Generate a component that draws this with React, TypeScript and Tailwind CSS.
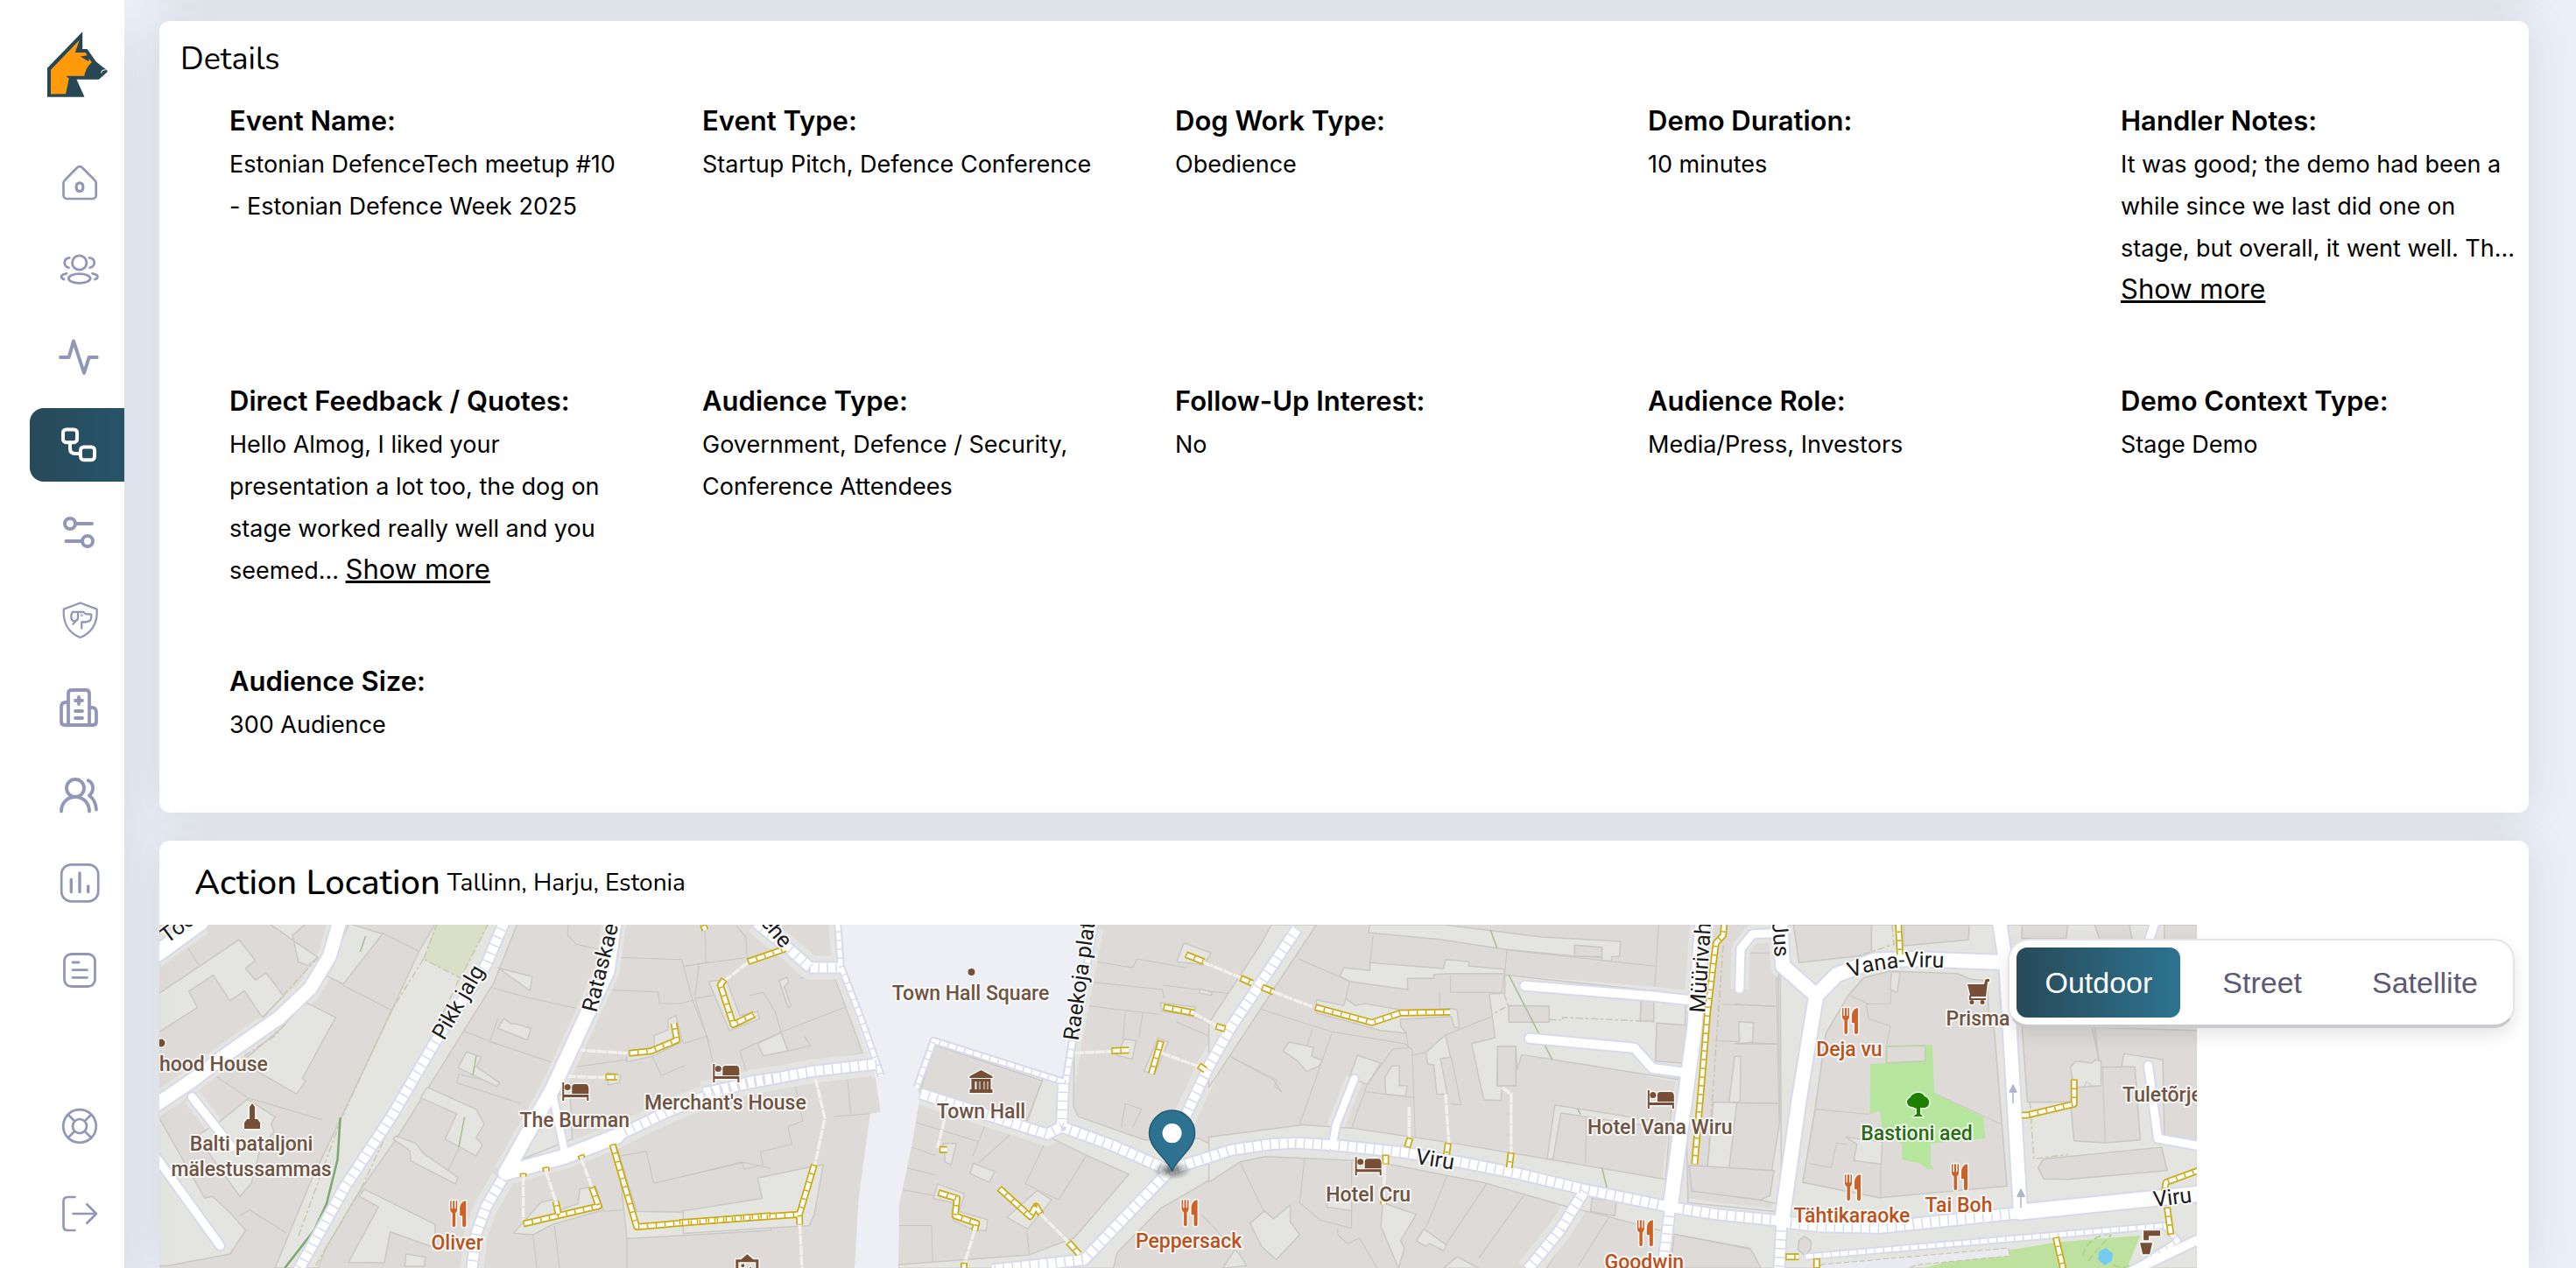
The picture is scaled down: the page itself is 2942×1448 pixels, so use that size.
import React, { useState } from 'react';

// ---------- Sidebar icons (48px grid) ----------

const HomeIcon = () => (
  <>
    <path strokeWidth="2.7" d="M6.5 25.5c0-1.8.7-3 2-4.2L22 7.5c1.8-1.8 4.2-1.8 6 0l13.7 13.8c1.3 1.2 2 2.4 2 4.2V39a4 4 0 0 1-4 4H10.5a4 4 0 0 1-4-4z" />
    <rect strokeWidth="3.2" x="21.2" y="24.8" width="7.6" height="9.6" rx="3.6" />
  </>
);

const TeamIcon = () => (
  <g strokeWidth="2.8">
    <circle cx="24.7" cy="16" r="8.2" />
    <ellipse cx="24.7" cy="34" rx="12.4" ry="5.4" />
    <path d="M13.3 10.3C6 11 6 20.5 12.5 21.7M36 10.3c7.5.7 7.5 10.2.7 11.4M10 28.3c-7 1.2-7.5 4.7-3 6.7M39.5 28.3c7 1.2 7.5 4.7 3 6.7" />
  </g>
);

const ActivityIcon = () => <path strokeWidth="4" d="M3 24h9.7L18 5.5 30 42l5.7-18h9" />;

const FlowIcon = () => (
  <g strokeWidth="4">
    <rect x="6" y="6.4" width="16" height="14.8" rx="3.6" />
    <rect x="26" y="26.4" width="16" height="14.8" rx="3.6" />
    <path d="M14 21.5v6.5c0 4 2 6 6 6h6" />
  </g>
);

const SlidersIcon = () => (
  <g strokeWidth="4">
    <circle cx="14" cy="14" r="6" />
    <path d="M20 14h19M9.5 34H28" />
    <circle cx="34" cy="34" r="6" />
  </g>
);

const ShieldDogIcon = () => (
  <g strokeWidth="2.3">
    <path d="M25.7 4.5 44.6 11.6C46 28 38 39 25.7 44 13.2 39 5.5 28 6.8 11.6z" />
    <path d="M17.5 14.8h11.8l2.4 2.2 6.6.7v2.4c0 2.6-1.2 4.8-3.4 5.6-2.2.8-4.8.8-7.6.8v7.2" />
    <path d="M17.5 14.8c-1.9 1.200-2.500 4-2 7.200.3 2.600 1.700 3.300 4 3 2.700-.3 3.500-1.200 3.500-3.500V15M20.500 25.500l-3.200 3.200" />
    <circle cx="27.3" cy="18.5" r=".4" />
  </g>
);

const HospitalIcon = () => (
  <g strokeWidth="3.8">
    <path d="M12 44V8c0-2.5 1.5-4 4-4h16c2.5 0 4 1.5 4 4v36" />
    <path d="M12 18H9.5C6 18 4 20 4 23v17c0 2.5 1.5 4 4 4h32c2.5 0 4-1.5 4-4V29c0-3-2-5-5-5h-3" />
    <path d="M24 12v8M20 16h8M20 28h8M20 36h8" />
  </g>
);

const PeopleIcon = () => (
  <g strokeWidth="3.8">
    <circle cx="20" cy="16" r="10" />
    <path d="M4 42.5C4 33 11 26 20 26s16 7 16 16.5M34.7 7.3c6.5 3 7.3 11.7 1.3 17.2 5 3.5 7.5 9 8 16" />
  </g>
);

const ChartIcon = () => (
  <>
    <rect strokeWidth="2.7" x="4.2" y="3.3" width="42" height="42" rx="11" />
    <path strokeWidth="3.4" d="M15.3 20.5v14M25 13v21.5M34.7 28v6.5" />
  </>
);

const DocIcon = () => (
  <g strokeWidth="2.8">
    <rect x="7.5" y="5.5" width="35" height="37" rx="8" />
    <path d="M17 15h7M17 23.7h16.5M17 32.3h16.5" />
  </g>
);

const HelpIcon = () => (
  <g strokeWidth="2.7">
    <circle cx="25" cy="24" r="18.8" />
    <circle cx="25" cy="24" r="8" />
    <path d="m11.7 10.7 7.6 7.6M38.3 10.7l-7.6 7.6M11.7 37.3l7.6-7.6M38.3 37.3l-7.6-7.6" />
  </g>
);

const LogoutIcon = () => (
  <path strokeWidth="2.7" d="M19.5 5h-8c-3.5 0-5 1.5-5 5v28c0 3.5 1.500 5 5 5h8M17.500 24H44M33.300 13.200 44 24 33.300 34.800" />
);

const mainNav = [
  { label: 'Home', icon: HomeIcon },
  { label: 'Teams', icon: TeamIcon },
  { label: 'Activity', icon: ActivityIcon },
  { label: 'Actions', icon: FlowIcon, active: true },
  { label: 'Settings', icon: SlidersIcon },
  { label: 'Dogs', icon: ShieldDogIcon },
  { label: 'Medical', icon: HospitalIcon },
  { label: 'Handlers', icon: PeopleIcon },
  { label: 'Reports', icon: ChartIcon },
  { label: 'Documents', icon: DocIcon },
];

const footerNav = [
  { label: 'Help', icon: HelpIcon },
  { label: 'Log out', icon: LogoutIcon },
];

type NavEntry = { label: string; icon: React.FC; active?: boolean };

const NavItem: React.FC<{ item: NavEntry }> = ({ item }) => {
  const Glyph = item.icon;
  return (
    <a
      href="#"
      aria-label={item.label}
      className={`flex h-[84px] items-center rounded-l-2xl pl-8 ${item.active ? 'bg-linear-to-r from-[#274a59] to-[#275469] text-white' : 'text-[#9297b7]'}`}
    >
      <svg viewBox="0 0 48 48" className="h-12 w-12" fill="none" stroke="currentColor" strokeLinecap="round" strokeLinejoin="round">
        <Glyph />
      </svg>
    </a>
  );
};

const Logo = () => (
  <svg viewBox="102 48 206 223" className="ml-5 h-[75px] w-[69px]">
    <path fill="#274754" d="M222 48v59h16l30 43 25 20c6 4 13 9 15 14l-30 27h-76l27 60H102v-99z" />
    <path fill="#ff9a0a" d="m114 178 98-102-15 43h36l5 10-23 4 28 17 1-10 10 12c-13 13-21 24-26 47h-62l10 8-11 53-51 1z" />
    <path fill="none" stroke="#fff" strokeWidth="3" d="M287 190c-2-7 2-12 14-12" />
  </svg>
);

const Sidebar = () => (
  <aside className="relative z-10 flex w-[142px] shrink-0 flex-col bg-white pt-9 pb-5 pl-[34px] shadow-[0_40px_60px_rgba(20,24,50,0.1)]">
    <Logo />
    <nav className="mt-[55px] flex flex-col gap-4">
      {mainNav.map((item) => <NavItem key={item.label} item={item} />)}
    </nav>
    <nav className="mt-auto flex flex-col gap-4">
      {footerNav.map((item) => <NavItem key={item.label} item={item} />)}
    </nav>
  </aside>
);

// ---------- Details ----------

const details = [
  { label: 'Event Name:', value: 'Estonian DefenceTech meetup #10 - Estonian Defence Week 2025' },
  { label: 'Event Type:', value: 'Startup Pitch, Defence Conference' },
  { label: 'Dog Work Type:', value: 'Obedience' },
  { label: 'Demo Duration:', value: '10 minutes' },
  { label: 'Handler Notes:', value: 'It was good; the demo had been a while since we last did one on stage, but overall, it went well. Th...', more: true },
  { label: 'Direct Feedback / Quotes:', value: 'Hello Almog, I liked your presentation a lot too, the dog on stage worked really well and you seemed...', more: true },
  { label: 'Audience Type:', value: 'Government, Defence / Security, Conference Attendees' },
  { label: 'Follow-Up Interest:', value: 'No' },
  { label: 'Audience Role:', value: 'Media/Press, Investors' },
  { label: 'Demo Context Type:', value: 'Stage Demo' },
  { label: 'Audience Size:', value: '300 Audience' },
];

const DetailsCard = () => (
  <section className="rounded-xl bg-white pt-[18px] pb-[76px] shadow-[0_0_50px_rgba(70,60,35,0.12)]">
    <h2 className="ml-6 font-['Nunito','Noto_Sans',sans-serif] text-[36px] leading-[52px]">Details</h2>
    <dl className="mt-[18px] -mr-[34px] ml-10 grid grid-cols-5 gap-y-[76px]">
      {details.map((item) => (
        <div key={item.label} className="px-10">
          <dt className="text-[31px] leading-[52px] font-semibold">{item.label}</dt>
          <dd className="text-[27px] leading-[48px]">
            {item.value}{' '}
            {item.more && <button className="text-[31px] leading-8 underline">Show more</button>}
          </dd>
        </div>
      ))}
    </dl>
  </section>
);

// ---------- Map ----------

// Geometry is stored per tile; each tile has its own origin and scale.
type Tile = { x: number; y: number; sx: number; sy: number };
const W: Tile = { x: 180, y: 920, sx: 2.24, sy: 2.97 };
const C: Tile = { x: 780, y: 1040, sx: 2.24, sy: 3 };
const E: Tile = { x: 1380, y: 1040, sx: 2.24, sy: 3 };
const F: Tile = { x: 1980, y: 1040, sx: 1.63, sy: 3 };

const project = (t: Tile, points: string) =>
  points
    .split(' ')
    .map((p) => {
      const [x, y] = p.split(',').map(Number);
      return `${(t.x + x / t.sx).toFixed(1)},${(t.y + y / t.sy).toFixed(1)}`;
    })
    .join(' ');

type Shape = [Tile, string];
type Line = [Tile, string, number];

const open: Shape[] = [
  [W, '710,400 920,400 860,600 610,1130 510,1320 430,1500 410,1568 300,1568 390,1280 600,690 670,490'],
  [W, '0,640 208,455 250,525 225,552 250,592 278,568 322,645 268,718 222,628 185,662 142,575 80,630 102,685 0,770'],
  [W, '375,665 455,718 370,925 378,935 355,978 215,870 320,750'],
  [W, '285,400 410,515 385,542 360,530 345,440 380,400'],
  [W, '490,400 575,435 475,605 428,575'],
  [W, '160,1070 230,995 300,1055 290,1080 298,1105 262,1165 240,1280 210,1325 100,1120'],
  [W, '0,1050 120,1330 140,1325 185,1380 225,1440 185,1520 25,1560 0,1560'],
  [W, '870,550 958,580 952,628'],
  [W, '885,722 905,740 918,740 955,755 945,795 870,755'],
  [W, '790,835 828,852 815,885 875,940 868,952 768,888'],
  [W, '690,955 815,1030 835,1080 815,1125 830,1150 815,1188 735,1130 765,1045 672,990'],
  [W, '610,1120 660,1145 680,1180 768,1260 762,1283 648,1205 645,1170 602,1130'],
  [W, '528,1300 710,1420 710,1500 595,1445 580,1550 488,1548 565,1360 515,1325'],
  [W, '635,1520 685,1530 682,1562 632,1562'],
  [W, '1010,980 1055,980 1060,1130 930,1200'],
  [W, '1175,1160 1225,1375 1335,1378 1568,1335 1568,1440 1200,1468'],
  [W, '980,1345 1010,1335 1030,1370 1075,1350 1080,1300 1120,1290 1140,1370 1010,1420 960,1455 910,1450'],
  [W, '1200,845 1270,820 1270,780 1305,760 1305,725 1325,712 1342,800 1265,850 1200,868'],
  [W, '1150,905 1185,915 1180,940 1152,948'],
  [C, '190,915 345,872 358,870 335,1040 322,1078 0,1105 0,1028 202,985'],
  [C, '65,243 110,235 145,360 190,345 195,370 118,410'],
  [C, '245,240 265,228 270,245 258,260 275,325 268,330'],
  [C, '190,455 250,418 268,480 205,497'],
  [C, '650,935 720,970 705,1030 778,1058 775,1095 745,1095 690,1060 690,1000 640,985'],
  [C, '905,958 942,990 880,1090 828,1050 870,1000'],
  [C, '742,865 797,893 782,930 733,900'],
  [C, '665,797 698,797 685,870 670,860'],
  [C, '1280,110 1350,145 1330,185 1262,175'],
  [C, '1220,315 1310,330 1305,360 1225,345'],
  [C, '1215,435 1240,450 1205,560 1178,550'],
  [C, '1128,440 1158,445 1148,508 1108,495'],
  [C, '1322,268 1352,280 1350,290 1320,282'],
  [C, '918,580 1000,460 998,670 1010,705 1180,785 1320,780 1422,860 1310,950 1220,1020 1110,1170 1100,1224 550,1224 550,1212 885,1178 1000,1120 1140,902 1035,840 860,725 880,720'],
  [C, '1410,1160 1422,1175 1440,1215 1380,1224'],
  [E, '160,48 275,48 165,270 0,605 0,385 135,110'],
  [E, '335,225 345,195 412,205 412,178 600,198 605,167 665,175 665,190 755,200 755,215 620,215 575,218 575,232 508,232 508,270 360,242'],
  [E, '412,48 600,48 850,90 1053,105 1050,155 1030,158 1030,172 1005,170 1005,160 935,155 760,133 590,98 408,75'],
  [E, '275,305 345,325 350,302 375,325 400,318 500,342 620,335 635,340 640,400 628,400 620,362 490,372 490,395 505,420 440,410 275,350'],
  [E, '717,285 757,283 757,220 1140,275 1220,290 1215,520 1200,578 800,493 788,545 785,465 740,465 736,600 750,600 747,650 703,648 672,455 732,435'],
  [E, '555,485 605,425 618,502 592,507 610,628 583,628 575,528 560,525'],
  [E, '380,495 440,522 405,595 360,570'],
  [E, '450,570 468,532 487,530 487,598 507,600 503,635 452,628'],
  [E, '190,480 205,450 268,468 262,497 290,512 282,532 250,550 225,512'],
  [E, '885,665 1165,725 1165,745 900,693 880,850 865,850'],
  [E, '0,775 240,733 370,745 620,795 865,850 1168,920 1185,640 1220,640 1225,1000 1450,1030 1568,1030 1568,1100 1480,1224 1400,1224 1380,1155 1190,1108 1000,1040 920,1015 700,930 450,865 370,855 145,842 80,860 0,930'],
  [E, '105,1070 142,1028 165,1055 208,1008 208,1065 232,1110 172,1195 135,1150'],
  [E, '445,1000 530,1040 490,1130 500,1155 485,1224 440,1080'],
  [E, '305,980 365,990 365,1028 302,1015'],
  [E, '530,1130 550,1090 608,1145 600,1165 565,1140 555,1150'],
  [E, '635,1185 690,1224 600,1224'],
  [E, '1355,380 1393,383 1390,450 1357,455'],
  [E, '1345,498 1360,500 1358,655 1330,655'],
  [E, '1290,655 1350,657 1330,885 1275,880'],
  [E, '1455,60 1500,60 1500,175 1568,170 1568,1040 1410,990 1430,970 1460,720'],
  [F, '85,48 861,48 861,1224 88,1224'],
];

const blocks: Shape[] = [
  [E, '767,325 870,327 870,382 767,382'],
  [E, '935,118 1005,125 1005,158 935,155'],
  [E, '738,465 785,465 785,600 738,600'],
  [E, '980,985 1042,995 1038,1045 976,1030'],
  [E, '1105,308 1138,312 1138,378 1103,378'],
  [E, '1145,385 1222,392 1212,522 1142,515'],
  [E, '1228,872 1445,890 1435,975 1410,990 1235,960'],
  [E, '1190,1108 1385,1158 1412,1224 1180,1224'],
  [C, '640,458 918,582 878,722 608,612'],
  [F, '110,48 255,48 255,150 120,178'],
  [F, '315,48 437,48 435,100 315,120'],
  [F, '170,420 212,290 240,230 290,207 415,215 440,235 470,240 475,400 483,400 507,943 270,983 127,930 150,680'],
  [F, '535,395 665,395 680,530 745,535 755,785 690,795 632,788 625,655 545,655'],
  [F, '575,850 795,810 805,890 620,920 575,918 565,880'],
  [F, '670,400 861,410 861,795 800,775 797,510 725,490 720,535 680,535'],
  [F, '535,48 620,48 617,95 535,95'],
  [F, '670,48 735,48 740,100 680,100'],
  [F, '800,48 861,48 861,100 800,100'],
  [F, '120,1130 130,1115 142,1130 142,1160 130,1180 118,1160'],
];

const yards: Shape[] = [
  [F, '625,535 635,515 665,522 672,510 682,515 682,600 632,605'],
  [F, '207,775 275,792 273,868 222,855 228,800'],
  [F, '292,210 308,210 303,280 290,270'],
];

const borders: Shape[] = [
  [W, '65,455 105,540'], [W, '575,432 670,495'], [W, '475,610 600,695'], [W, '210,1390 235,1370 330,1450'],
  [W, '45,1420 75,1505 25,1530 5,1430 45,1420'], [W, '135,905 230,990 420,1065'], [W, '850,615 945,650 1080,690'],
  [W, '870,720 850,800 1040,885'], [W, '785,765 870,810'], [W, '1050,400 1048,440 1070,470 1130,488'],
  [W, '1180,515 1340,522 1368,660 1410,800'], [W, '1150,625 1280,632 1283,670 1335,672 1368,660'], [W, '1350,545 1410,530'],
  [W, '850,935 770,910 765,940 930,1010'], [W, '740,1245 770,1160'], [W, '560,1460 580,1470 578,1520 560,1518'],
  [W, '1265,850 1288,915 1350,880'], [W, '1075,885 1260,850'], [W, '1268,1280 1500,1210 1568,1230'], [W, '1175,1190 1250,1172 1268,1280'],
  [W, '960,1455 970,1568'], [W, '1015,1425 1028,1568'], [W, '1140,1375 1200,1370'], [W, '1200,1468 1200,1568'],
  [C, '135,50 160,90 165,180'], [C, '55,55 58,175'], [C, '0,190 165,160'], [C, '40,185 30,300 75,290'], [C, '30,300 60,430 80,540'],
  [C, '0,455 60,430'], [C, '145,480 250,415 415,330'], [C, '245,415 270,480 325,462 310,430'], [C, '170,290 205,280 235,345 250,415'],
  [C, '145,480 165,570'], [C, '300,230 385,220 458,487 165,570'], [C, '285,590 305,720 268,740 278,800 198,825 203,870 155,885'],
  [C, '362,575 490,562'], [C, '420,575 428,695'], [C, '385,705 480,695'], [C, '155,885 150,860 0,910'],
  [C, '595,725 755,790 740,840'], [C, '585,810 645,838'], [C, '570,880 645,905'], [C, '560,955 640,975'], [C, '550,1078 635,1078 638,1205'],
  [C, '755,865 845,755'], [C, '925,795 875,935 960,990 1030,840'], [C, '878,1095 885,1178'], [C, '775,725 755,790'],
  [C, '1055,175 1150,195 1160,165 1285,195'], [C, '1050,245 1225,270 1230,300'], [C, '1030,325 1215,355'], [C, '1130,345 1125,440'],
  [C, '1175,352 1165,435'], [C, '1228,255 1400,285'], [C, '1270,350 1385,400'], [C, '1260,380 1345,430'], [C, '1130,660 1172,680 1150,740'],
  [C, '1130,660 1120,740'], [C, '1425,865 1485,1030'], [C, '1325,1040 1410,1160'], [C, '1400,500 1510,580 1530,620'],
  [E, '230,165 360,242 350,300'], [E, '135,338 315,415 500,455 520,475'], [E, '55,500 175,580 168,600 187,622'], [E, '315,418 230,740'],
  [E, '520,475 528,790'], [E, '520,495 555,485 605,425 725,362'], [E, '505,420 510,470 470,475 405,595 365,745'], [E, '620,500 645,665 620,662'],
  [E, '420,85 412,178'], [E, '360,242 510,270'], [E, '618,220 618,280 750,280 755,215'], [E, '762,135 757,215'], [E, '765,135 1140,190'],
  [E, '1150,48 1140,275'], [E, '590,280 590,335'], [E, '1310,320 1450,328'], [E, '1300,445 1455,457'], [E, '1285,655 1455,660'],
  [E, '1380,145 1450,145 1458,720'], [E, '965,705 963,865'], [E, '245,845 232,1000 285,1060 365,1087'], [E, '365,860 365,1087'],
  [E, '610,905 555,1085'], [E, '710,935 600,1155'], [E, '808,970 690,1190'], [E, '955,1020 865,1224'], [E, '1025,1045 945,1215'],
  [E, '385,1120 430,1224'], [E, '330,1085 330,1110 355,1140 385,1120'], [E, '400,620 525,640'], [E, '265,405 250,465'],
  [F, '152,680 250,697'], [F, '245,320 250,370 290,395 283,460'], [F, '245,320 290,318 292,275'], [F, '215,290 250,320'],
  [F, '372,625 495,730'], [F, '140,865 180,880 190,795 210,800'], [F, '272,865 272,980'], [F, '685,535 690,795'], [F, '632,605 650,605 655,585 665,600 682,600'],
  [F, '0,320 75,328'], [F, '0,455 80,457'], [F, '0,658 80,660'],
];

const paths: Shape[] = [
  [W, '680,520 600,690 470,1060 360,1460'], [W, '715,400 680,520 775,585 845,400'], [W, '770,590 520,1300 400,1568'],
  [W, '410,515 270,718'], [W, '375,665 300,780 215,855'],
  [E, '870,373 905,375 905,365 1140,380'], [E, '755,285 765,325 725,355'], [E, '1315,120 1275,880'],
  [F, '550,655 557,850 620,835'], [F, '293,48 297,115 230,155'],
];

const fences: Shape[] = [
  [W, '532,442 518,495'], [W, '815,848 806,915'], [W, '785,1055 770,1158'],
  [E, '720,65 737,128'], [E, '767,220 878,510'], [E, '1005,880 1018,950'], [E, '943,678 950,697'],
];

const streets: Line[] = [
  [W, '466,390 440,510 390,620 310,720 180,840 90,930 -10,1020', 15],
  [W, '-10,510 110,395', 18],
  [W, '88,988 190,1158', 9],
  [W, '-10,1180 160,1492', 9],
  [W, '1168,390 1150,560 1080,760 1010,960 890,1245', 16],
  [W, '1012,990 1040,1170', 8],
  [W, '890,1245 1040,1190 1175,1120', 16],
  [E, '1262,40 1242,400 1180,1015', 16],
  [E, '808,257 1140,293 1240,308', 10],
  [E, '820,437 1088,470 1135,540 1220,555', 10],
  [E, '372,575 325,735 316,805', 8],
  [E, '1357,268 1360,130 1390,80 1470,75', 9],
  [F, '85,40 90,190 152,290 120,650 88,1065', 16],
  [F, '152,290 190,220 260,170 330,165 540,180', 16],
  [F, '493,40 505,180 532,1030', 15],
  [F, '532,1032 870,968', 17],
  [F, '770,530 788,780 870,807', 9],
  [F, '782,40 770,110', 9],
  [F, '870,1120 740,1234', 10],
];

const walks: Line[] = [
  [W, '888,390 840,540 710,800 600,1050 480,1290 360,1575', 11],
  [W, '882,1265 840,1360 815,1450 803,1575', 11],
  [W, '1175,1120 1300,1040 1430,970 1520,935 1575,924', 11],
  [C, '50,625 170,590 330,550 495,525', 11],
  [C, '185,40 270,130 325,195 402,195', 11],
  [C, '395,40 403,190 455,370 506,565', 5],
  [C, '1050,60 995,450 978,590', 6],
  [C, '978,588 640,445 597,605', 5],
  [C, '605,625 930,765 968,740 972,590', 11],
  [C, '968,740 1100,805 1240,888', 11],
  [C, '1240,888 1330,850 1400,820 1500,800 1568,795', 11],
  [C, '1240,895 1025,1195 790,1230', 11],
  [C, '1570,60 1500,200 1400,400 1345,530 1250,800', 11],
  [E, '220,795 340,805 500,828 640,860 790,900 960,955 1180,1015 1300,1040 1450,1060', 11],
  [E, '960,960 900,1090 815,1230', 11],
  [E, '1180,1015 1160,1230', 11],
  [F, '88,1065 160,1080 270,1085 400,1060 530,1035', 12],
  [F, '88,1065 83,1230', 11],
  [F, '130,1185 800,1078 825,1130 740,1230', 5],
];

const arcades: Shape[] = [
  [W, '1205,840 1262,832 1328,795 1320,738'], [W, '1145,920 1175,920'], [W, '935,1418 1128,1358 1110,1292'], [W, '1025,1388 1018,1342'],
  [W, '1163,1148 1225,1428 1568,1390'], [W, '1395,404 1400,422'], [W, '935,1246 935,1258'], [W, '992,1225 994,1240'], [W, '1082,1184 1085,1196'],
  [C, '165,175 262,130'], [C, '105,235 95,255 128,390 182,355'], [C, '335,870 297,1040 298,1075'], [C, '-10,1068 297,1040'],
  [C, '652,965 700,985 695,1045 750,1070 745,1095'], [C, '808,950 887,1047 902,1012 915,1040'], [C, '985,1135 1012,1175'],
  [C, '718,1205 718,1230'], [C, '655,818 675,818'], [C, '1285,150 1332,175'], [C, '1228,330 1306,350'], [C, '1095,480 1140,478'],
  [C, '1222,445 1197,558'], [C, '1425,230 1455,248'], [C, '1480,262 1510,278'], [C, '1362,395 1386,405'], [C, '1318,530 1335,545'],
  [E, '272,330 417,383 490,350 617,347'], [E, '1318,40 1315,85 1297,110 1290,180 1275,350 1262,560 1242,868'],
  [E, '515,778 507,810'], [E, '612,795 608,835'], [E, '773,828 768,880'], [E, '452,835 452,868'], [E, '447,980 447,1005'],
  [F, '305,40 308,150'], [F, '632,577 632,662 545,700 535,700'], [F, '870,885 803,930 800,960'], [F, '805,1015 812,1110'],
  [F, '598,1118 612,1230'], [F, '95,1185 120,1185'], [F, '153,1190 153,1230'],
];

const passages: Shape[] = [
  [W, '1070,828 1205,840'], [W, '1045,918 1145,922'], [W, '935,1256 935,1410'], [W, '993,1240 1018,1342'], [W, '1083,1195 1110,1292'],
  [C, '165,178 105,240'], [C, '338,575 362,710 337,870'], [C, '298,1075 304,1230'], [C, '668,715 650,812'], [C, '745,1095 720,1205'],
  [C, '915,1040 985,1135'], [C, '1332,178 1430,232'], [C, '1510,278 1610,330'], [C, '1306,352 1365,395'], [C, '1000,487 1095,482'],
  [C, '1222,487 1325,537'], [E, '512,672 512,778'], [E, '605,628 614,795'], [E, '750,605 773,628 773,828'], [E, '450,868 447,980'],
];

const BROWN = '#6f5443';
const ORANGE = '#b9531c';

// x, y, text, colour
const places: [number, number, string, string][] = [
  [287, 1314, 'Balti pataljoni', BROWN],
  [287, 1343, 'mälestussammas', BROWN],
  [522, 1427, 'Oliver', ORANGE],
  [656, 1287, 'The Burman', BROWN],
  [828, 1267, "Merchant's House", BROWN],
  [1108, 1142, 'Town Hall Square', BROWN],
  [1120, 1277, 'Town Hall', BROWN],
  [1357, 1425, 'Peppersack', ORANGE],
  [1562, 1372, 'Hotel Cru', BROWN],
  [1895, 1295, 'Hotel Vana Wiru', BROWN],
  [1877, 1449, 'Goodwin', ORANGE],
  [2111, 1206, 'Deja vu', ORANGE],
  [2258, 1171, 'Prisma', BROWN],
  [2188, 1302, 'Bastioni aed', '#2a6b18'],
  [2236, 1384, 'Tai Boh', ORANGE],
  [2114, 1396, 'Tähtikaraoke', ORANGE],
];

// x, y, angle, text, anchor
const streetNames: [number, number, number, string, 'start' | 'middle' | 'end'][] = [
  [191, 1078, -37, 'Toompea', 'start'],
  [507, 1189, -60, 'Pikk jalg', 'start'],
  [681, 1157, -76, 'Rataskaevu', 'start'],
  [893, 1084, 50, 'Voorimehe', 'end'],
  [1231, 1189, -82, 'Raekoja plats', 'start'],
  [1946, 1157, -86, 'Müürivahe', 'start'],
  [2026, 1093, 86, 'Aia / Jus', 'end'],
  [1637, 1332, 9, 'Viru', 'middle'],
  [2459, 1378, -7, 'Viru', 'start'],
];

const beds = [[657, 1247], [829, 1226], [1562, 1332], [1896, 1256]];
const restaurants = [[523, 1386], [1358, 1385], [1878, 1408], [2112, 1166], [2237, 1344], [2115, 1356]];

const Bed = () => (
  <path d="M-15-11h2V3h28v7h-2V6h-26v4h-2zM-4 2v-7c0-3 1-4 4-4h11c3 0 4 2 4 5v6zM-9-9a3.5 3.5 0 1 1 0 7 3.5 3.5 0 0 1 0-7z" />
);

const Cutlery = () => (
  <path d="M-9-15h1.5v9h1.5v-9h2v9h1.5v-9H-1v10c0 2-1 3-2 4V13c0 2.5-3.5 2.5-3.5 0V-1c-1.5-1-2.5-2-2.5-4zM9-15V13c0 2.5-4 2.5-4 0V2H2v-8c0-5 3-9 7-9z" />
);

const Polys: React.FC<{ items: Shape[] }> = ({ items }) => (
  <>{items.map(([t, p], i) => <polygon key={i} points={project(t, p)} />)}</>
);

const Lines: React.FC<{ items: Shape[] }> = ({ items }) => (
  <>{items.map(([t, p], i) => <polyline key={i} points={project(t, p)} />)}</>
);

const Roads: React.FC<{ items: Line[]; extra: number }> = ({ items, extra }) => (
  <>{items.map(([t, p, w], i) => <polyline key={i} points={project(t, p)} strokeWidth={w + extra} />)}</>
);

const CityMap = () => (
  <svg
    viewBox="182 1056 2326 392"
    preserveAspectRatio="xMinYMin slice"
    className="block h-full w-[86%] bg-[#dddad7]"
    role="img"
    aria-label="Map of Tallinn"
    strokeLinejoin="round"
  >
    {/* Ground, courtyards and buildings */}
    <g fill="none" stroke="#c9c6c2" strokeWidth="1"><Lines items={borders} /></g>
    <g fill="none" stroke="#e4e4e0"><Roads items={walks} extra={16} /><Roads items={streets} extra={12} /></g>
    <g fill="#e4e4e0" stroke="#cbc9c5" strokeWidth="1.5"><Polys items={open} /></g>
    <g fill="#dddad7" stroke="#c9c7c3" strokeWidth="1.5"><Polys items={blocks} /></g>
    <g fill="#e4e4e0" stroke="#cbc9c5" strokeWidth="1.5"><Polys items={yards} /></g>
    <g fill="none" stroke="#c9c6c2" strokeWidth="1"><Lines items={borders.filter(([t]) => t === F)} /></g>

    {/* Parks, water and the square */}
    <polygon fill="#dadfc7" points={project(W, '710,400 848,400 775,585 680,522')} />
    <polygon fill="#b6e59e" points={project(F, '253,525 355,518 355,462 368,458 372,625 463,707 467,780 365,797 365,870 372,885 360,885 345,865 312,852 312,797 290,780 275,740 270,685 252,697')} />
    <polygon fill="#dddad7" stroke="#c3cfb4" strokeWidth="2" points={project(F, '283,465 355,462 355,515 283,522')} />
    <polygon fill="#bfe19f" points={project(F, '350,1224 420,1190 600,1135 755,1112 730,1224')} />
    <g fill="none" stroke="#a9d58d" strokeWidth="2" strokeDasharray="8 4">
      <path d="M2378 1434c2-14 14-24 34-26M2384 1440c8-12 18-22 26-30M2412 1444c8 4 14 4 20 0" />
    </g>
    <path fill="#73cbf2" d="M2396 1429l8-4 8 6-1 8-8 6-8-7z" />
    <polygon fill="#e9eaf0" stroke="#c9bfa8" strokeDasharray="6 3" points={project(F, '160,1212 510,1155 512,1182 340,1212 300,1240 160,1240')} />
    <polygon fill="#edeff4" points={project(C, '395,40 1055,40 985,440 978,590 640,440 600,610 605,640 585,800 552,1010 550,1230 438,1230 448,990 478,695 505,690 490,560 400,200')} />
    <g fill="none" stroke="#cbc6b2" strokeWidth="1.5" strokeDasharray="8 3 3 3"><Lines items={paths} /></g>
    <g fill="none" stroke="#a5bd97" strokeWidth="1.5"><Lines items={fences} /></g>
    <polyline fill="none" stroke="#7fa870" strokeWidth="2.5" points={project(W, '467,1058 460,1200 432,1350 400,1440 325,1568')} />

    {/* Roads */}
    <g fill="none" stroke="#f3f0ed" strokeWidth="3.5" strokeDasharray="11 1"><Lines items={passages} /></g>
    <g fill="none" stroke="#d7daea"><Roads items={walks} extra={4} /></g>
    <g fill="none" stroke="#d7daea" strokeLinecap="round"><Roads items={streets} extra={4} /></g>
    <g fill="none" stroke="#fff"><Roads items={walks} extra={0} /></g>
    <g fill="none" stroke="#d7daea" strokeDasharray="1.5 8.5"><Roads items={walks} extra={0} /></g>
    <g fill="none" stroke="#fff" strokeLinecap="round"><Roads items={streets} extra={0} /></g>
    <g fill="none" stroke="#cbaa10" strokeWidth="8"><Lines items={arcades} /></g>
    <g fill="none" stroke="#fff" strokeWidth="4.5"><Lines items={arcades} /></g>
    <g fill="none" stroke="#cbaa10" strokeWidth="4.5" strokeDasharray="1.5 8.5"><Lines items={arcades} /></g>
    <g stroke="#b1b5cc" fill="#b1b5cc" strokeWidth="1.5">
      <path d="M2298 1260v-16M2294 1247h8l-4-8z" />
      <path d="M2307 1379v-16M2303 1366h8l-4-8z" />
    </g>

    {/* Points of interest */}
    <g stroke="#fff" strokeOpacity=".8" strokeWidth="3" style={{ paintOrder: 'stroke' }}>
      <g fill="#774f36">
        {beds.map(([x, y]) => <g key={x} transform={`translate(${x} ${y})`}><Bed /></g>)}
        <path transform="translate(288 1275)" d="M0-15l3 4V3h3l3 4v7H-9V7l3-4h3v-14z" />
        <path transform="translate(1120 1235)" fillRule="evenodd" d="M0-13l13 7v2h-26v-2zM-11-3h22V9h2v4h-26V9h2zM-7 0V9h2V0zM-2 0V9h1V0zM3 0V9h1V0zM7 0V9h1V0z" />
        <path transform="translate(2259 1132)" d="M-13-8H6l1-4c0-1 1-2 2-2h3v3h-2L8 6h-17v2H8v2h-19V5l1-1zM-8 10a2.5 2.5 0 1 1 0 5 2.5 2.5 0 0 1 0-5zM4 10a2.5 2.5 0 1 1 0 5 2.5 2.5 0 0 1 0-5z" />
        <path transform="translate(2455 1418)" d="M-8-13h19v6H-2v5h-6zM-12 1H2L-1 14h-8z" />
        <path transform="translate(853 1448)" fillRule="evenodd" d="M0-16l7 6h6V8h-26V-10h6zM-10-7V8h20V-7zM-7-3a2 2 0 1 1 4 0 2 2 0 0 1-4 0zM0 4l4-6 4 10z" />
        <circle cx="1109" cy="1110" r="4" />
        <circle cx="184" cy="1191" r="4.5" />
      </g>
      <path fill="#1f8000" transform="translate(2190 1262)" d="M0-14c4 0 6 2 7 4 4 1 6 5 5 8 0 3-3 5-6 5H2v7l3 3H-6l4-3V4l-5-2c-4 0-6-3-6-6 0-2 2-4 4-5 1-3 5-5 9-5z" />
      <g fill="#cd6127">
        {restaurants.map(([x, y]) => <g key={x} transform={`translate(${x} ${y})`}><Cutlery /></g>)}
      </g>
    </g>

    {/* Labels */}
    <g className="font-['Roboto',sans-serif] text-[23px] font-medium" stroke="#fff" strokeOpacity=".8" strokeWidth="4" style={{ paintOrder: 'stroke' }}>
      <g textAnchor="middle">
        {places.map(([x, y, text, fill]) => <text key={text} x={x} y={y} fill={fill}>{text}</text>)}
      </g>
      <text x="182" y="1223" fill={BROWN}>hood House</text>
      <text x="2423" y="1258" fill={BROWN}>Tuletõrje</text>
    </g>
    <g className="font-['Roboto',sans-serif] text-[25px]" fill="#1c1c1c" stroke="#fff" strokeOpacity=".85" strokeWidth="4" style={{ paintOrder: 'stroke' }}>
      {streetNames.map(([x, y, a, text, anchor]) => (
        <text key={x} textAnchor={anchor} transform={`translate(${x} ${y}) rotate(${a})`}>{text}</text>
      ))}
      <path id="vana-viru" fill="none" stroke="none" d="M2113 1117Q2150 1100 2230 1106" />
      <text><textPath href="#vana-viru">Vana-Viru</textPath></text>
    </g>

    {/* Marker */}
    <defs>
      <radialGradient id="pin-shadow">
        <stop offset="0" stopColor="#000" stopOpacity=".55" />
        <stop offset="1" stopColor="#000" stopOpacity="0" />
      </radialGradient>
    </defs>
    <ellipse cx="1338" cy="1336" rx="22" ry="11" fill="url(#pin-shadow)" />
    <path fill="#2d7391" stroke="#215a73" strokeWidth="1.5" d="M1338 1337c-6-15-26-25-26-43a26 26 0 0 1 52 0c0 18-20 28-26 43z" />
    <circle cx="1338" cy="1294" r="11" fill="#fff" />
  </svg>
);

const layers = ['Outdoor', 'Street', 'Satellite'];

const LocationCard = () => {
  const [layer, setLayer] = useState('Outdoor');
  return (
    <section className="flex flex-1 flex-col rounded-t-xl bg-white shadow-[0_0_50px_rgba(70,60,35,0.12)]">
      <div className="flex h-24 shrink-0 items-center gap-2 pl-10 font-['Nunito','Noto_Sans',sans-serif]">
        <h2 className="text-[40px] leading-[52px] font-medium">Action Location</h2>
        <p className="text-[28px] leading-[48px]">Tallinn, Harju, Estonia</p>
      </div>
      <div className="relative min-h-0 flex-1">
        <CityMap />
        <div className="absolute top-4 right-4 flex gap-4 rounded-3xl border-2 border-b-4 border-[#e4e4e8] border-b-[#c9c9ce] bg-white p-2 font-['Liberation_Sans',sans-serif] text-[34px] shadow-[0_8px_20px_rgba(0,0,0,0.1)]">
          {layers.map((name) => (
            <button
              key={name}
              onClick={() => setLayer(name)}
              className={`h-20 rounded-xl px-8 ${name === layer ? 'bg-linear-to-r from-[#274a59] to-[#2d7391] text-white' : 'text-[#5d5873]'}`}
            >
              {name}
            </button>
          ))}
        </div>
      </div>
    </section>
  );
};

export default function App() {
  return (
    <div className="flex h-screen overflow-hidden bg-[#ebeff8] font-['Inter',sans-serif] text-black">
      <Sidebar />
      <main className="flex min-w-0 flex-1 flex-col gap-8 pr-[54px] pl-10">
        <div className="-mt-[88px] h-20 shrink-0 rounded-xl bg-white shadow-[0_0_50px_rgba(70,60,35,0.12)]" />
        <DetailsCard />
        <LocationCard />
      </main>
    </div>
  );
}
